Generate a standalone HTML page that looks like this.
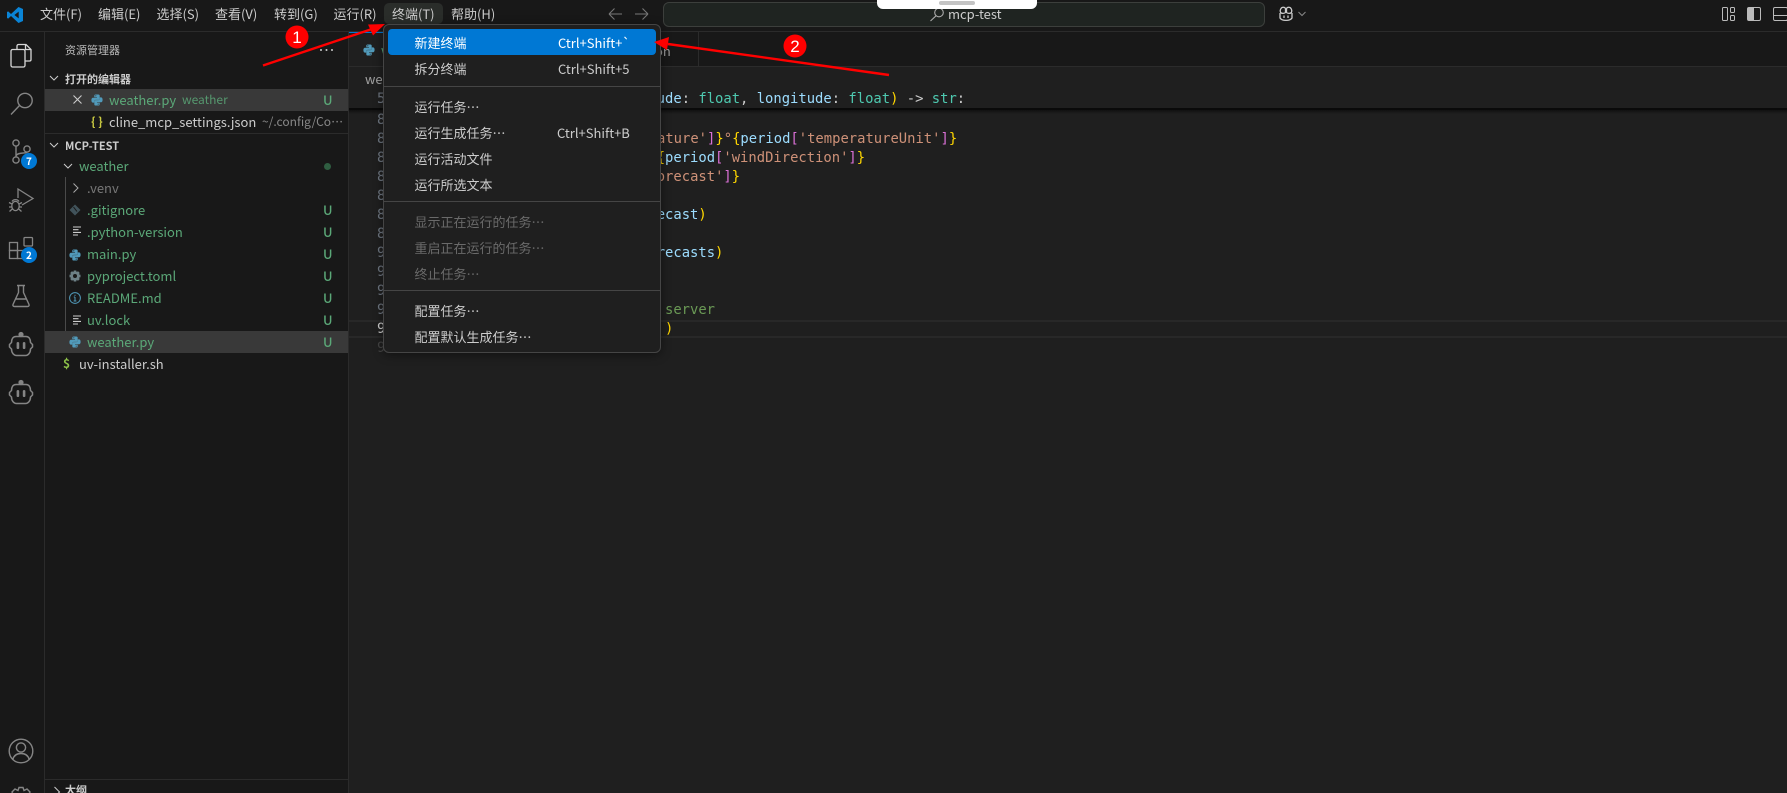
<!DOCTYPE html>
<html lang="zh"><head><meta charset="utf-8"><title>mcp-test</title>
<style>
html,body{margin:0;padding:0;width:1787px;height:793px;overflow:hidden;background:#181818}
body{position:relative;font-family:"Noto Sans CJK SC","Liberation Sans",sans-serif;font-size:13px;color:#ccc}
div,span.a,svg{position:absolute}
.t{position:absolute;white-space:pre;height:22px;line-height:22px}
.g{color:#5ba878}
.u{left:323px;color:#5ba878;font-weight:500;font-size:13px}
.h{font-size:11px;font-weight:700;color:#ccc}
.code{position:absolute;white-space:pre;height:19px;line-height:19px;font-family:"DejaVu Sans Mono","Liberation Mono",monospace;font-size:13.85px;color:#9cdcfe}
.n{left:377px;color:#6e7681}
.mi{left:414.5px;height:26px;line-height:26px;white-space:pre;position:absolute}
.k{left:558px;height:26px;line-height:26px;white-space:pre;position:absolute}
.d{color:#6a6a6a}
.sep{left:0;width:276px;height:1px;background:#454545;position:absolute}
.b{color:#da70d6}.y{color:#ffd700}.s{color:#ce9178}.c{color:#4ec9b0}.w{color:#ccc}
</style></head><body>

<!-- editor background -->
<div style="left:349px;top:66px;width:1438px;height:727px;background:#1f1f1f"></div>
<!-- title bar -->
<div style="left:0;top:31px;width:1787px;height:1px;background:#2b2b2b"></div>
<svg style="left:6px;top:6px" width="18" height="18" viewBox="0 0 18 18"><path d="M12.5 1 L17 3 V15 L12.5 17 L5 10 L2.2 12.6 L1 12 V6 L2.2 5.4 L5 8 Z M12.7 5.6 L8.4 9 L12.7 12.4 Z" fill="#0a84d6" fill-rule="evenodd"/></svg>
<span class="t" style="left:40px;top:3px">文件(F)</span>
<span class="t" style="left:98px;top:3px">编辑(E)</span>
<span class="t" style="left:156.5px;top:3px">选择(S)</span>
<span class="t" style="left:215px;top:3px">查看(V)</span>
<span class="t" style="left:274px;top:3px">转到(G)</span>
<span class="t" style="left:333.5px;top:3px">运行(R)</span>
<div style="left:384px;top:3px;width:59px;height:21px;border-radius:5px;background:#2a2d2a"></div>
<span class="t" style="left:392px;top:3px">终端(T)</span>
<span class="t" style="left:451px;top:3px">帮助(H)</span>
<svg style="left:606px;top:6px" width="46" height="16" viewBox="0 0 46 16" fill="none" stroke="#777" stroke-width="1.1"><path d="M3 8H16M3 8L8.5 2.5M3 8L8.5 13.5"/><path d="M29 8H42M42 8L36.5 2.5M42 8L36.5 13.5"/></svg>
<div style="left:663px;top:2px;width:600px;height:23px;border:1px solid #3c3f3c;border-radius:6px;background:#1f2421"></div>
<svg style="left:929px;top:7px" width="16" height="15" viewBox="0 0 16 15" fill="none" stroke="#aaa" stroke-width="1.1"><circle cx="10" cy="5.5" r="4.3"/><path d="M7 8.8L1.5 14"/></svg>
<span class="t" style="left:948px;top:3px">mcp-test</span>
<div style="left:877px;top:0;width:160px;height:9px;background:#fff;border-radius:0 0 6px 6px"></div>
<div style="left:939px;top:1px;width:36px;height:3.5px;background:#c4c4c4;border-radius:2px"></div>
<svg style="left:1277px;top:6px" width="18" height="16" viewBox="0 0 18 16" fill="none" stroke="#ccc" stroke-width="1.3"><path d="M4 2.5C5 .8 7.8 .8 8.5 2.6V6.5C7.5 7.6 4.8 7.8 3.6 6.5C3 5 3.2 3.6 4 2.5Z"/><path d="M14 2.5C13 .8 10.2 .8 9.5 2.6V6.5C10.5 7.6 13.2 7.8 14.4 6.5C15 5 14.8 3.6 14 2.5Z"/><path d="M3 7V12C5 15.2 13 15.2 15 12V7"/><path d="M7 9.5V12M11 9.5V12"/></svg>
<svg style="left:1297px;top:10px" width="10" height="8" viewBox="0 0 10 8" fill="none" stroke="#888"><path d="M1.5 2L5 5.5L8.5 2"/></svg>
<svg style="left:1722px;top:7px" width="65" height="14" viewBox="0 0 65 14" fill="none" stroke="#bbb"><rect x=".5" y=".5" width="5" height="13" rx="1"/><rect x="8.5" y=".5" width="4" height="5" rx="1"/><rect x="8.5" y="8.5" width="4" height="5" rx="1"/><rect x="25.5" y=".5" width="13" height="13" rx="1.5"/><rect x="26" y="1" width="6" height="12" fill="#bbb" stroke="none"/><rect x="51.5" y=".5" width="14" height="13" rx="1.5"/><path d="M51.5 8.5H65"/></svg>

<!-- activity bar -->
<div style="left:44px;top:32px;width:1px;height:761px;background:#2b2b2b"></div>
<svg style="left:9px;top:43px" width="24" height="26" viewBox="0 0 24 26" fill="none" stroke="#d7d7d7" stroke-width="1.3"><path d="M8 6V3C8 2 8.8 1.5 9.5 1.5H17L22 6.5V16.5C22 17.4 21.3 18 20.5 18H16"/><path d="M16 6.5H22M16.5 2V6.5"/><rect x="2" y="6.5" width="14" height="17.5" rx="1.6"/></svg>
<svg style="left:9px;top:91px" width="26" height="26" viewBox="0 0 26 26" fill="none" stroke="#858585" stroke-width="1.4"><circle cx="16" cy="9.5" r="7.2"/><path d="M10.5 14.5L2 23.5"/></svg>
<svg style="left:9px;top:138px" width="24" height="28" viewBox="0 0 24 28" fill="none" stroke="#858585" stroke-width="1.4"><circle cx="7" cy="5" r="3.1"/><circle cx="18" cy="11" r="3.1"/><circle cx="7" cy="22" r="3.1"/><path d="M7 8V19M18 14.2C18 15.5 8 14 7 18"/></svg>
<div style="left:21px;top:153px;width:16px;height:16px;border-radius:50%;background:#0078d4;color:#fff;font-size:10px;font-weight:700;line-height:16px;text-align:center">7</div>
<svg style="left:8px;top:187px" width="27" height="27" viewBox="0 0 27 27" fill="none" stroke="#858585" stroke-width="1.3"><path d="M10 11V2L25 11.5L14 18"/><ellipse cx="7.5" cy="19" rx="3.7" ry="4.6"/><path d="M4 14.5C5.5 12 9.5 12 11 14.5M1 15.5L4 17M14 15.5L11 17M1 20H4M14 20H11M1.5 24.5L4.2 22M13.5 24.5L10.8 22"/></svg>
<svg style="left:8px;top:236px" width="26" height="26" viewBox="0 0 26 26" fill="none" stroke="#858585" stroke-width="1.3"><rect x="1.5" y="6.5" width="8" height="8"/><rect x="1.5" y="14.5" width="8" height="8"/><rect x="9.5" y="14.5" width="8" height="8"/><rect x="16" y="1.5" width="8.5" height="8.5" rx="1"/></svg>
<div style="left:21px;top:247px;width:16px;height:16px;border-radius:50%;background:#0078d4;color:#fff;font-size:10px;font-weight:700;line-height:16px;text-align:center">2</div>
<svg style="left:11px;top:284px" width="20" height="24" viewBox="0 0 20 24" fill="none" stroke="#858585" stroke-width="1.4"><path d="M6 1.5H14M7.5 1.5V8.5L2 20.5C1.6 21.6 2.3 22.5 3.5 22.5H16.5C17.7 22.5 18.4 21.6 18 20.5L12.5 8.5V1.5M5 15H15"/></svg>
<svg style="left:8px;top:331px" width="26" height="26" viewBox="0 0 26 26" fill="none" stroke="#858585" stroke-width="1.5"><circle cx="13" cy="3.5" r="2.6" fill="#858585" stroke="none"/><path d="M8 5.5H18C21 5.5 22.5 8 22.5 11.5L24.5 13.5V16L22.5 18C22.5 22 20 24.5 17.5 24.5H8.5C6 24.5 3.5 22 3.5 18L1.5 16V13.5L3.5 11.5C3.5 8 5 5.5 8 5.5Z"/><rect x="8.6" y="11" width="2.6" height="7" rx="1.3" fill="#858585" stroke="none"/><rect x="14.8" y="11" width="2.6" height="7" rx="1.3" fill="#858585" stroke="none"/></svg>
<svg style="left:8px;top:379px" width="26" height="26" viewBox="0 0 26 26" fill="none" stroke="#858585" stroke-width="1.5"><circle cx="13" cy="3.5" r="2.6" fill="#858585" stroke="none"/><path d="M8 5.5H18C21 5.5 22.5 8 22.5 11.5L24.5 13.5V16L22.5 18C22.5 22 20 24.5 17.5 24.5H8.5C6 24.5 3.5 22 3.5 18L1.5 16V13.5L3.5 11.5C3.5 8 5 5.5 8 5.5Z"/><rect x="8.6" y="11" width="2.6" height="7" rx="1.3" fill="#858585" stroke="none"/><rect x="14.8" y="11" width="2.6" height="7" rx="1.3" fill="#858585" stroke="none"/></svg>
<svg style="left:8px;top:738px" width="26" height="26" viewBox="0 0 26 26" fill="none" stroke="#858585" stroke-width="1.4"><circle cx="13" cy="13" r="11.8"/><circle cx="13" cy="9.5" r="4.6"/><path d="M4.8 21.5C6 17 9.5 15.5 13 15.5C16.5 15.5 20 17 21.2 21.5"/></svg>
<svg style="left:9px;top:786px" width="24" height="24" viewBox="0 0 24 24" fill="none" stroke="#858585" stroke-width="1.4"><circle cx="12" cy="12" r="4"/><path d="M10 1.5H14L15 4.5L18 3L21 6L19.5 9L22.5 10V14L19.5 15L21 18L18 21L15 19.5L14 22.5H10L9 19.5L6 21L3 18L4.5 15L1.5 14V10L4.5 9L3 6L6 3L9 4.5Z"/></svg>

<!-- sidebar -->
<div style="left:348px;top:32px;width:1px;height:761px;background:#2b2b2b"></div>
<span class="t" style="left:65px;top:39px;font-size:11px;color:#bbb">资源管理器</span>
<svg style="left:319px;top:48px" width="15" height="4" viewBox="0 0 15 4" fill="#ccc"><circle cx="2" cy="2" r="1"/><circle cx="7.5" cy="2" r="1"/><circle cx="13" cy="2" r="1"/></svg>

<svg style="left:49px;top:73px" width="10" height="10" viewBox="0 0 10 10" fill="none" stroke="#ccc"><path d="M1 3L5 7L9 3"/></svg>
<span class="t h" style="left:65px;top:68px">打开的编辑器</span>

<div style="left:45px;top:89px;width:303px;height:22px;background:#393939"></div>
<svg style="left:72px;top:94px" width="11" height="11" viewBox="0 0 11 11" fill="none" stroke="#ccc" stroke-width="1.1"><path d="M1.5 1.5L9.5 9.5M9.5 1.5L1.5 9.5"/></svg>
<svg style="left:91px;top:94px" width="12" height="12" viewBox="0 0 12 12"><g id="py" fill="#519aba" fill-rule="evenodd"><path id="pya" d="M4.6 .5H7.4C8.2 .5 8.7 1 8.7 1.8V4.6C8.7 5.4 8.2 5.9 7.4 5.9H4.7C3.8 5.9 3.3 6.4 3.3 7.3V8.6H2C1 8.6 .4 7.7 .4 6.1C.4 4.6 1 3.7 2 3.7H6V3.2H3.3V1.8C3.3 1 3.8 .5 4.6 .5ZM4.8 1.3A.55 .55 0 1 0 4.8 2.4A.55 .55 0 0 0 4.8 1.3Z"/><use href="#pya" transform="rotate(180 6 6)"/></g></svg>
<span class="t g" style="left:109px;top:89px">weather.py</span>
<span class="t g" style="left:182px;top:89px;font-size:12px;opacity:.85">weather</span>
<span class="t u" style="top:89px">U</span>

<span class="t" style="left:91px;top:111px;color:#cbcb41;font-size:12px;font-weight:700">{ }</span>
<span class="t" style="left:109px;top:111px">cline_mcp_settings.json</span>
<span class="t" style="left:262px;top:111px;font-size:12px;color:#888">~/.config/Co…</span>
<div style="left:45px;top:133px;width:303px;height:1px;background:#2b2b2b"></div>

<svg style="left:49px;top:140px" width="10" height="10" viewBox="0 0 10 10" fill="none" stroke="#ccc"><path d="M1 3L5 7L9 3"/></svg>
<span class="t h" style="left:65px;top:134.5px">MCP-TEST</span>

<svg style="left:63px;top:161px" width="10" height="10" viewBox="0 0 10 10" fill="none" stroke="#ccc"><path d="M1 3L5 7L9 3"/></svg>
<span class="t g" style="left:79px;top:155px">weather</span>
<div style="left:323.5px;top:162.5px;width:7px;height:7px;border-radius:50%;background:#2f5e41"></div>

<div style="left:65px;top:177px;width:1px;height:176px;background:#4a4a4a"></div>
<svg style="left:72px;top:182px" width="8" height="12" viewBox="0 0 8 12" fill="none" stroke="#aaa"><path d="M1.5 1.5L6 6L1.5 10.5"/></svg>
<span class="t" style="left:87px;top:177px;color:#777">.venv</span>

<svg style="left:69px;top:204px" width="12" height="12" viewBox="0 0 12 12"><path d="M6 .5L11.5 6L6 11.5L.5 6Z" fill="#41535b"/><path d="M4.5 3L8 7.5" stroke="#181818"/></svg>
<span class="t g" style="left:87px;top:199px">.gitignore</span><span class="t u" style="top:199px">U</span>

<svg style="left:73px;top:226px" width="9" height="10" viewBox="0 0 9 10" stroke="#ccc" stroke-width="1.1"><path d="M0 1H8M0 3.7H5.5M0 6.4H8M0 9H5"/></svg>
<span class="t g" style="left:87px;top:221px">.python-version</span><span class="t u" style="top:221px">U</span>

<svg style="left:69px;top:249px" width="12" height="12" viewBox="0 0 12 12"><use href="#py"/></svg>
<span class="t g" style="left:87px;top:243px">main.py</span><span class="t u" style="top:243px">U</span>

<svg style="left:69px;top:270px" width="12" height="12" viewBox="0 0 12 12"><path d="M4.8 .5H7.2L7.6 2L9.1 1.3L10.7 2.9L10 4.4L11.5 4.8V7.2L10 7.6L10.7 9.1L9.1 10.7L7.6 10L7.2 11.5H4.8L4.4 10L2.9 10.7L1.3 9.1L2 7.6L.5 7.2V4.8L2 4.4L1.3 2.9L2.9 1.3L4.4 2ZM6 4A2 2 0 1 0 6 8A2 2 0 0 0 6 4Z" fill="#6d8086" fill-rule="evenodd"/></svg>
<span class="t g" style="left:87px;top:265px">pyproject.toml</span><span class="t u" style="top:265px">U</span>

<svg style="left:69px;top:292px" width="12" height="12" viewBox="0 0 12 12" fill="none" stroke="#519aba"><circle cx="6" cy="6" r="5.4"/><path d="M6 5V9M6 2.7V3.9M4.8 5H6M4.6 9H7.4"/></svg>
<span class="t g" style="left:87px;top:287px">README.md</span><span class="t u" style="top:287px">U</span>

<svg style="left:73px;top:315px" width="9" height="10" viewBox="0 0 9 10" stroke="#ccc" stroke-width="1.1"><path d="M0 1H8M0 3.7H5.5M0 6.4H8M0 9H5"/></svg>
<span class="t g" style="left:87px;top:309px">uv.lock</span><span class="t u" style="top:309px">U</span>

<div style="left:45px;top:331px;width:303px;height:22px;background:#393939"></div>
<svg style="left:69px;top:336px" width="12" height="12" viewBox="0 0 12 12"><use href="#py"/></svg>
<span class="t g" style="left:87px;top:331px">weather.py</span><span class="t u" style="top:331px">U</span>

<span class="t" style="left:63px;top:353px;color:#8dc149;font-weight:700;font-size:12px">$</span>
<span class="t" style="left:79px;top:353px">uv-installer.sh</span>

<div style="left:45px;top:779px;width:303px;height:1px;background:#2b2b2b"></div>
<svg style="left:53px;top:786px" width="8" height="12" viewBox="0 0 8 12" fill="none" stroke="#ccc"><path d="M1.5 1L6.5 6L1.5 11"/></svg>
<span class="t h" style="left:65px;top:779px">大纲</span>

<!-- tabs -->
<div style="left:349px;top:32px;width:36px;height:34px;background:#1f1f1f"></div>
<div style="left:349px;top:32px;width:36px;height:1px;background:#0078d4"></div>
<div style="left:698px;top:32px;width:1px;height:34px;background:#2b2b2b"></div>
<div style="left:349px;top:66px;width:1438px;height:1px;background:#2b2b2b"></div>
<svg style="left:363px;top:44px" width="12" height="12" viewBox="0 0 12 12"><use href="#py"/></svg>
<span class="t g" style="left:381px;top:39px">w</span>
<span class="t" style="left:655px;top:40px;color:#999">on</span>
<span class="t" style="left:365px;top:68px;color:#a0a0a0">we</span>

<!-- code -->
<div class="code n" style="top:90px">5</div>
<div class="code" style="left:615px;top:90px">latitude<span class="w">: </span><span class="c">float</span><span class="w">, </span>longitude<span class="w">: </span><span class="c">float</span><span class="y">)</span><span class="w"> -&gt; </span><span class="c">str</span><span class="w">:</span></div>
<div style="left:349px;top:108px;width:1438px;height:2px;background:#0a0a0a"></div>
<div style="left:349px;top:110px;width:1438px;height:4px;background:linear-gradient(#111,#1f1f1f)"></div>

<div class="code n" style="top:111px">8</div>
<div class="code n" style="top:130px">8</div>
<div class="code n" style="top:149px">8</div>
<div class="code n" style="top:168px">8</div>
<div class="code n" style="top:187px">8</div>
<div class="code n" style="top:206px">8</div>
<div class="code n" style="top:225px">8</div>
<div class="code n" style="top:244px">9</div>
<div class="code n" style="top:263px">9</div>
<div class="code n" style="top:282px">9</div>
<div class="code n" style="top:301px">9</div>
<div class="code n" style="top:320px;color:#ccc">9</div>
<div class="code n" style="top:339px;color:#444">9</div>

<div class="code s" style="left:607px;top:130px">temperature'<span class="b">]</span><span class="y">}</span>°<span class="y">{</span><span style="color:#9cdcfe">period</span><span class="b">[</span>'temperatureUnit'<span class="b">]</span><span class="y">}</span></div>
<div class="code" style="left:656.7px;top:149px"><span class="y">{</span>period<span class="b">[</span><span class="s">'windDirection'</span><span class="b">]</span><span class="y">}</span></div>
<div class="code s" style="left:648.4px;top:168px">Forecast'<span class="b">]</span><span class="y">}</span></div>
<div class="code" style="left:656.7px;top:206px">ecast<span class="y">)</span></div>
<div class="code" style="left:656.7px;top:244px">recasts<span class="y">)</span></div>
<div class="code" style="left:665px;top:301px;color:#6a9955">server</div>
<div style="left:349px;top:320px;width:1438px;height:18px;box-sizing:border-box;border-top:2px solid #282828;border-bottom:2px solid #282828"></div>
<div class="code y" style="left:665px;top:320px">)</div>

<!-- menu -->
<div style="left:383px;top:24px;width:276px;height:327px;background:#1f1f1f;border:1px solid #454545;border-radius:6px;box-shadow:0 2px 10px rgba(0,0,0,.45)">
  <div style="left:4px;top:4px;width:268px;height:26px;background:#0078d4;border-radius:4px"></div>
</div>
<span class="mi" style="top:30px;color:#fff">新建终端</span><span class="k" style="top:30px;color:#fff">Ctrl+Shift+`</span>
<span class="mi" style="top:56px">拆分终端</span><span class="k" style="top:56px">Ctrl+Shift+5</span>
<div class="sep" style="left:384px;top:86px"></div>
<span class="mi" style="top:94px">运行任务…</span>
<span class="mi" style="top:120px">运行生成任务…</span><span class="k" style="top:120px;left:557px">Ctrl+Shift+B</span>
<span class="mi" style="top:146px">运行活动文件</span>
<span class="mi" style="top:172px">运行所选文本</span>
<div class="sep" style="left:384px;top:201px"></div>
<span class="mi d" style="top:209px">显示正在运行的任务…</span>
<span class="mi d" style="top:235px">重启正在运行的任务…</span>
<span class="mi d" style="top:261px">终止任务…</span>
<div class="sep" style="left:384px;top:290px"></div>
<span class="mi" style="top:298px">配置任务…</span>
<span class="mi" style="top:324px">配置默认生成任务…</span>

<!-- annotations -->
<svg style="left:0;top:0" width="1787" height="793" viewBox="0 0 1787 793">
  <path d="M263 65.5L372 29" stroke="#f00" stroke-width="2.4" fill="none"/>
  <path d="M385 24L373 35.5L368 24.5Z" fill="#f00"/>
  <path d="M889 75L668 44" stroke="#f00" stroke-width="2.4" fill="none"/>
  <path d="M654 42L669 37L667 50Z" fill="#f00"/>
  <circle cx="297" cy="37" r="11.5" fill="#f00"/>
  <circle cx="795" cy="46" r="11.5" fill="#f00"/>
  <text x="297" y="43" text-anchor="middle" font-family="Liberation Sans" font-size="17" fill="#fff">1</text>
  <text x="795" y="52" text-anchor="middle" font-family="Liberation Sans" font-size="17" fill="#fff">2</text>
</svg>
</body></html>
